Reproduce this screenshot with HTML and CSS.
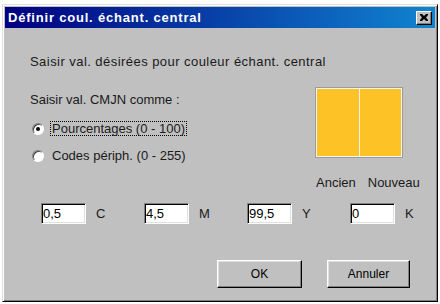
FILE: index.html
```html
<!DOCTYPE html>
<html lang="fr">
<head>
  <meta charset="UTF-8">
  <title>Définir coul. échant. central</title>
  <link rel="stylesheet" href="styles.css">
</head>
<body>
  <div class="window">
    <div class="titlebar">
      <span class="title">Définir coul. échant. central</span>
      <span class="close-btn">
        <svg width="8" height="7" viewBox="0 0 8 7">
          <path d="M0 0h2l2 2 2-2h2v1l-2 2.5 2 2.5v1h-2l-2-2-2 2h-2v-1l2-2.5-2-2.5z" fill="#000"/>
        </svg>
      </span>
    </div>

    <div class="content">
      <div class="intro">Saisir val. désirées pour couleur échant. central</div>

      <div class="mid">
        <div class="left-col">
          <div class="prompt">Saisir val. CMJN comme :</div>
          <div class="option first">
            <span class="radio checked"></span>
            <span class="opt-label focused">Pourcentages (0 - 100)</span>
          </div>
          <div class="option second">
            <span class="radio"></span>
            <span class="opt-label">Codes périph. (0 - 255)</span>
          </div>
        </div>

        <div class="right-col">
          <div class="swatches">
            <div class="swatch"></div>
            <div class="swatch"></div>
          </div>
          <div class="swatch-labels">
            <span>Ancien</span>
            <span>Nouveau</span>
          </div>
        </div>
      </div>

      <!-- CMJN fields -->
      <div class="fields">
        <div class="field"><input type="text" value="0,5"><span>C</span></div>
        <div class="field"><input type="text" value="4,5"><span>M</span></div>
        <div class="field"><input type="text" value="99,5"><span>Y</span></div>
        <div class="field"><input type="text" value="0"><span>K</span></div>
      </div>

      <div class="buttons">
        <button class="ok">OK</button>
        <button class="cancel">Annuler</button>
      </div>
    </div>
  </div>
</body>
</html>
```

FILE: styles.css
```css
body {
  margin: 0;
  background: #fff;
  font-family: "Liberation Sans", Arial, sans-serif;
  font-size: 13px;
  color: #1a1a1a;
}
.window {
  margin: 4px 0 0 2px;
  width: 436px;
  height: 298px;
  box-sizing: border-box;
  background: #c0c0c0;
  border: 1px solid;
  border-color: #dfdfdf #000 #000 #dfdfdf;
  box-shadow: inset 1px 1px #fff, inset -1px -1px #808080;
  padding: 2px;
}
.titlebar {
  height: 21px;
  display: flex;
  align-items: center;
  justify-content: space-between;
  padding: 0 3px 0 3px;
  background: linear-gradient(to right, #000080, #1084d0);
}
.title {
  color: #fff;
  font-weight: bold;
  font-size: 13px;
  letter-spacing: 0.8px;
}
.close-btn {
  width: 16px;
  height: 14px;
  box-sizing: border-box;
  background: #c0c0c0;
  border: 1px solid;
  border-color: #fff #000 #000 #fff;
  box-shadow: inset -1px -1px #808080;
  display: flex;
  align-items: center;
  justify-content: center;
}
.content {
  padding: 27px 25px 0 25px;
}
.intro {
  line-height: 14px;
  letter-spacing: 0.45px;
}
.mid {
  display: flex;
  margin-top: 18px;
}
.left-col {
  width: 285px;
  flex-shrink: 0;
}
.right-col {
  width: 88px;
  flex-shrink: 0;
}
.prompt {
  margin-top: 6px;
  line-height: 14px;
}
.option {
  display: flex;
  align-items: center;
  height: 15px;
}
.option.first {
  margin-top: 14px;
}
.option.second {
  margin-top: 12px;
}
.radio {
  width: 12px;
  height: 12px;
  box-sizing: border-box;
  margin-left: 2px;
  border-radius: 50%;
  border: 1px solid;
  border-color: #808080 #fff #fff #808080;
  background: #fff;
  box-shadow: inset 1px 1px #404040;
  display: flex;
  align-items: center;
  justify-content: center;
}
.radio.checked::after {
  content: "";
  width: 4px;
  height: 4px;
  border-radius: 50%;
  background: #000;
}
.opt-label {
  margin-left: 6px;
  padding: 0 1px;
  border: 1px dotted transparent;
  line-height: 13px;
}
.opt-label.focused {
  border-color: #000;
}
.swatches {
  display: flex;
  gap: 1px;
  width: 88px;
  height: 71px;
  box-sizing: border-box;
  border: 1px solid #9c9c9c;
  background: #f4f4f4;
  padding: 1px;
}
.swatch {
  flex: 1;
  background: #fdc326;
}
.swatch-labels {
  display: flex;
  gap: 12px;
  margin-top: 18px;
  margin-left: 1px;
  line-height: 14px;
  white-space: nowrap;
}
.fields {
  display: grid;
  grid-template-columns: repeat(4, 103px);
  margin: 13px 0 0 11px;
}
.field {
  display: flex;
  align-items: center;
  gap: 10px;
}
.field input {
  width: 45px;
  height: 21px;
  box-sizing: border-box;
  margin: 0;
  padding: 0 1px;
  font: inherit;
  color: #000;
  background: #fff;
  border: 1px solid;
  border-color: #808080 #fff #fff #808080;
  box-shadow: inset 1px 1px #000, inset -1px -1px #dfdfdf;
  outline: none;
}
.buttons {
  display: flex;
  justify-content: flex-end;
  gap: 25px;
  margin-top: 36px;
}
button {
  width: 85px;
  height: 28px;
  box-sizing: border-box;
  background: #c0c0c0;
  font: inherit;
  font-size: 12px;
  color: #000;
  border: 1px solid;
  border-color: #fff #000 #000 #fff;
  box-shadow: inset -1px -1px #808080, inset 1px 1px #dfdfdf;
  padding: 0;
}
button.cancel {
  width: 83px;
}
```
